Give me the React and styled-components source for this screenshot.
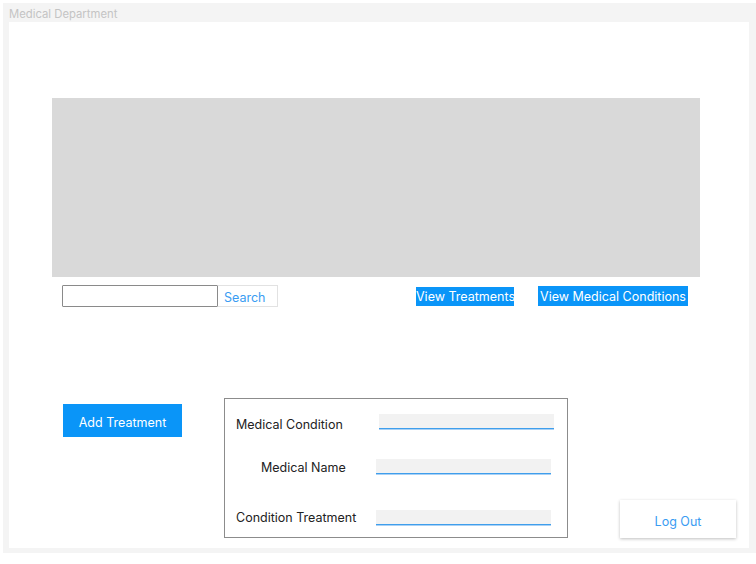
import React from 'react';
import styled, {createGlobalStyle} from "styled-components";

const GlobalStyle = createGlobalStyle`
    body {
        margin: 0;
        background: #fff;
        font-family: Inter, "Noto Sans", sans-serif;
    }
`;

const Frame = styled.div`
    margin: 3px 0 0 3px;
    width: 753px;
    height: 550px;
    background: #f4f4f4;
    display: flex;
    flex-direction: column;
`;

const TitleBar = styled.div`
    height: 19px;
    line-height: 23px;
    padding-left: 6px;
    font-size: 11.3px;
    color: #c4c4c4;
`;

const Panel = styled.div`
    margin: 0 0 5px 6px;
    width: 740px;
    flex: 1;
    background: #fff;
    display: flex;
    flex-direction: column;
`;

const Preview = styled.div`
    margin: 76px 0 0 43px;
    width: 648px;
    height: 179px;
    background: #d9d9d9;
`;

const Toolbar = styled.div`
    display: flex;
    align-items: flex-start;
    margin: 8px 0 0 53px;
`;

const SearchInput = styled.input`
    box-sizing: border-box;
    width: 156px;
    height: 22px;
    border: 1px solid #8a8a8a;
    border-radius: 1px;
    outline: none;
`;

const SearchButton = styled.button`
    all: unset;
    box-sizing: border-box;
    width: 60px;
    height: 22px;
    padding-left: 6px;
    border: 1px solid #e2e2e2;
    border-left: none;
    font-size: 12.5px;
    line-height: 23px;
    color: #3a9cf2;
`;

const BlueButton = styled.button`
    all: unset;
    box-sizing: border-box;
    background: #0a95f8;
    color: #fff;
    font-size: 12.5px;
    text-align: center;
    white-space: nowrap;
    cursor: pointer;
`;

const ViewButton = styled(BlueButton)`
    height: ${p => p.h}px;
    width: ${p => p.w}px;
    margin-left: ${p => p.left}px;
    margin-top: ${p => p.top}px;
    line-height: ${p => p.h + 1}px;
`;

const BottomRow = styled.div`
    display: flex;
    align-items: flex-start;
    margin: 91px 0 0 54px;
`;

const AddButton = styled(BlueButton)`
    width: 119px;
    height: 33px;
    line-height: 37px;
    margin-top: 6px;
`;

const FormBox = styled.div`
    box-sizing: border-box;
    width: 344px;
    height: 140px;
    margin-left: 42px;
    border: 1px solid #8c8c8c;
    padding: 15px 0 0 11px;
`;

const FieldRow = styled.div`
    display: flex;
    align-items: center;
    margin-top: ${p => p.top || 0}px;
`;

const Label = styled.label`
    box-sizing: border-box;
    width: ${p => p.w}px;
    padding-left: ${p => p.indent || 0}px;
    font-size: 12.5px;
    color: #222;
    position: relative;
    top: ${p => p.shift || 0}px;
`;

const FieldInput = styled.input`
    appearance: none;
    box-sizing: border-box;
    width: 175px;
    height: 15px;
    padding: 0;
    border: 0;
    border-bottom: 1px solid #3f9eec;
    box-shadow: 0 1px 0 #a9d1f5;
    background: #f2f2f2;
    outline: none;
`;

const LogOutButton = styled.button`
    all: unset;
    box-sizing: border-box;
    width: 116px;
    height: 38px;
    margin: 102px 0 0 52px;
    background: #fff;
    text-align: center;
    line-height: 43px;
    font-size: 12.5px;
    color: #3a9cf2;
    box-shadow: 0 1px 3px rgba(0,0,0,.25);
    cursor: pointer;
`;

export default function App() {
    return (
        <>
            <GlobalStyle/>
            <Frame>
                <TitleBar>Medical Department</TitleBar>
                <Panel>
                    <Preview/>
                    <Toolbar>
                        <SearchInput type="text"/>
                        <SearchButton>Search</SearchButton>
                        <ViewButton w={98} h={19} left={138} top={2}>View Treatments</ViewButton>
                        <ViewButton w={150} h={20} left={24} top={1}>View Medical Conditions</ViewButton>
                    </Toolbar>
                    <BottomRow>
                        <AddButton>Add Treatment</AddButton>
                        <FormBox>
                            <FieldRow>
                                <Label w={143} shift={3}>Medical Condition</Label>
                                <FieldInput/>
                            </FieldRow>
                            <FieldRow top={30}>
                                <Label w={140} indent={25} shift={1}>Medical Name</Label>
                                <FieldInput/>
                            </FieldRow>
                            <FieldRow top={36}>
                                <Label w={140} shift={0}>Condition Treatment</Label>
                                <FieldInput/>
                            </FieldRow>
                        </FormBox>
                        <LogOutButton>Log Out</LogOutButton>
                    </BottomRow>
                </Panel>
            </Frame>
        </>
    );
}
